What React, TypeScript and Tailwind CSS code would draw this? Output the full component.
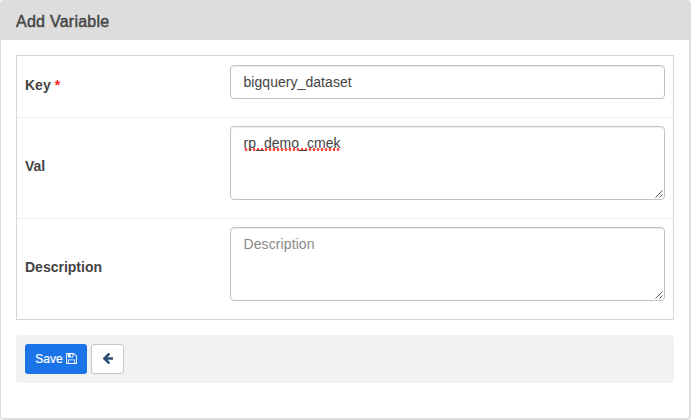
import type { ReactNode } from "react";

function SaveIcon() {
  return (
    <svg viewBox="0 128 1536 1536" className="mb-px h-[11px] w-[11px]" fill="currentColor">
      <path d="M384 1536h768v-384h-768v384zM1280 1536h128v-896q0-14-10-38.5t-20-34.5l-281-281q-10-10-34-20t-39-10v416q0 40-28 68t-68 28h-576q-40 0-68-28t-28-68v-416h-128v1280h128v-416q0-40 28-68t68-28h832q40 0 68 28t28 68v416zM896 608v-320q0-13-9.5-22.5t-22.5-9.5h-192q-13 0-22.5 9.5t-9.5 22.5v320q0 13 9.5 22.5t22.5 9.5h192q13 0 22.5-9.5t9.5-22.5zM1536 640v928q0 40-28 68t-68 28h-1344q-40 0-68-28t-28-68v-1344q0-40 28-68t68-28h928q40 0 88 20t76 48l280 280q28 28 48 76t20 88z" />
    </svg>
  );
}

function ArrowLeftIcon() {
  return (
    <svg viewBox="192 192 1472 1536" className="mb-px ml-px h-[11px] w-[10.5px]" fill="currentColor">
      <path d="M1664 896v128q0 53-32.5 90.5t-84.5 37.5h-704l293 294q38 36 38 90t-38 90l-75 76q-37 37-90 37-52 0-91-37l-651-652q-37-37-37-90 0-52 37-91l651-650q38-38 91-38 52 0 90 38l75 74q38 38 38 91t-38 91l-293 293h704q52 0 84.5 37.5t32.5 90.5z" />
    </svg>
  );
}

function ResizeHandle() {
  return (
    <svg viewBox="0 0 8 8" className="absolute right-px bottom-px h-2 w-2" stroke="#444" strokeWidth="0.9" fill="none">
      <path d="M0.5 7.5L7.5 0.5M4.5 7.5L7.5 4.5" />
    </svg>
  );
}

const box =
  "w-full rounded-[4px] border border-[#c2c2c2] bg-white shadow-[inset_0_1px_1px_rgba(0,0,0,0.075)] text-[14px] leading-5 tracking-[0.05px] text-[#444]";

function Row({ label, required, children }: { label: string; required?: boolean; children: ReactNode }) {
  return (
    <div className="flex border-b border-[#ededed] py-2 pr-2 pl-2 last:border-b-0">
      <div className="flex w-[205px] shrink-0 items-center pb-[3px] text-[14px] font-bold text-[#444]">
        <span>{label}</span>
        {required && <span className="ml-1 text-[#f22]">*</span>}
      </div>
      <div className="min-w-0 flex-1">{children}</div>
    </div>
  );
}

export default function App() {
  return (
    <div className="flex h-[420px] w-[691px] flex-col overflow-hidden rounded-[4px] border-r-2 border-b-2 border-l border-[#ddd] bg-white font-['Liberation_Sans',Arial,sans-serif]">
      <header className="flex h-10 shrink-0 items-center bg-[#ddd] pt-[3px] pl-[15px]">
        <h1 className="text-[16px] tracking-[0.25px] text-[#444] [-webkit-text-stroke:0.45px_#444]">Add Variable</h1>
      </header>
      <main className="pt-[15px] pr-[15px] pl-[15px]">
        <div className="border border-[#d5d5d5] pt-px">
          <Row label="Key" required>
            <div className={`mb-[10px] h-[34px] px-[12.5px] py-[6px] ${box}`}>bigquery_dataset</div>
          </Row>
          <Row label="Val">
            <div className={`relative mb-[10px] h-[74px] px-[12.5px] py-[6px] ${box}`}>
              <span className="bg-[radial-gradient(circle_at_center,#ff4b42_1.2px,transparent_1.7px)] bg-[length:4px_3px] bg-[position:0_100%] bg-repeat-x">rp_demo_cmek</span>
              <ResizeHandle />
            </div>
          </Row>
          <Row label="Description">
            <div className={`relative mb-[10px] h-[74px] px-[12.5px] py-[6px] ${box}`}>
              <span className="tracking-[0.1px] text-[#8a8a8a]">Description</span>
              <ResizeHandle />
            </div>
          </Row>
        </div>
        <footer className="mt-[15px] flex h-12 items-center gap-1 rounded-[4px] bg-[#f2f2f2] px-[9px]">
          <button className="flex h-[30px] w-[62px] items-center justify-center gap-[3px] rounded-[3px] bg-[#1c74e9] text-[12px] text-white [-webkit-text-stroke:0.2px_white]">
            Save <SaveIcon />
          </button>
          <button aria-label="Back" className="flex h-[30px] w-[33px] items-center justify-center rounded-[3px] border border-[#c8c8c8] bg-white text-[#2d5076]">
            <ArrowLeftIcon />
          </button>
        </footer>
      </main>
    </div>
  );
}
